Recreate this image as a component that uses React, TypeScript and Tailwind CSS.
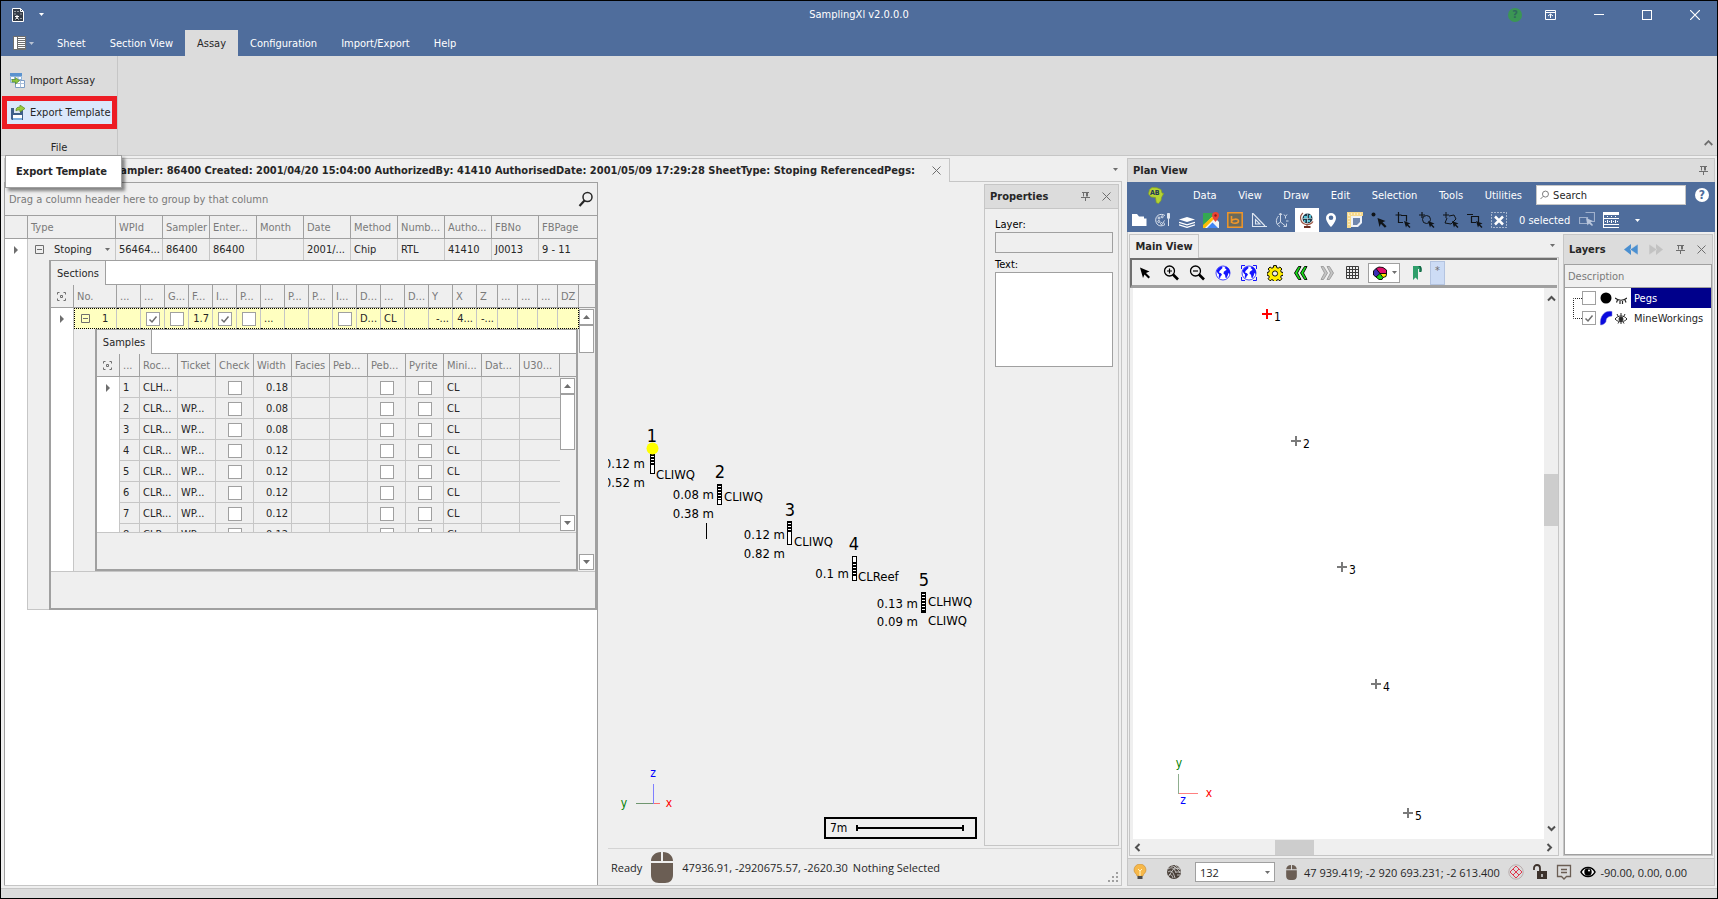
import React from "react";

type Kids = { children?: React.ReactNode };

/* ---------- small shared pieces ---------- */

function Svg({ size = 16, className = "", children }: Kids & { size?: number; className?: string }) {
  return (
    <svg width={size} height={size} viewBox="0 0 16 16" fill="none" aria-hidden="true" className={`shrink-0 ${className}`}>
      {children}
    </svg>
  );
}

function Tick({ checked = false, label }: { checked?: boolean; label: string }) {
  return (
    <span className="inline-grid size-[14px] shrink-0 align-middle">
      <input
        type="checkbox"
        defaultChecked={checked}
        aria-label={label}
        className="peer size-[14px] appearance-none border border-[#a0a0a0] bg-white [grid-area:1/1]"
      />
      <svg viewBox="0 0 14 14" className="pointer-events-none invisible size-[14px] peer-checked:visible [grid-area:1/1]" fill="none">
        <path d="M3.5 7.5 6 10l4.5-5.5" stroke="#6e6e6e" strokeWidth="1.5" />
      </svg>
    </span>
  );
}

function Caret({ className = "" }: { className?: string }) {
  return (
    <svg width="5" height="3" viewBox="0 0 5 3" aria-hidden="true" className={`shrink-0 ${className}`}>
      <path d="M0 0h5L2.5 3z" fill="currentColor" />
    </svg>
  );
}

function RowArrow() {
  return (
    <svg width="4" height="8" viewBox="0 0 4 8" className="mx-auto">
      <path d="M0 0l4 4-4 4z" fill="#6e6e6e" />
    </svg>
  );
}

function Minus() {
  return (
    <svg width="9" height="9" viewBox="0 0 9 9" className="inline-block shrink-0">
      <path d="M.5.5h8v8h-8zM2 4.5h5" fill="none" stroke="#6e6e6e" />
    </svg>
  );
}

function CornerBox() {
  return (
    <svg width="9" height="9" viewBox="0 0 9 9" className="ml-[3px]">
      <path d="M.5 2.500V.5h2M6.500.5h2v2M8.500 6.500v2h-2M2.500 8.500h-2v-2M3.500 3.500h2v2h-2z" fill="none" stroke="#6e6e6e" />
    </svg>
  );
}

function Pin() {
  return (
    <svg width="9" height="9" viewBox="0 0 9 9" fill="none" stroke="#6e6e6e">
      <path d="M1 .5h7M2.500.5v4M6.500.5v4M5.500.5v4M0 5.500h9M4.500 5v4" />
    </svg>
  );
}

function Cross() {
  return (
    <svg width="9" height="9" viewBox="0 0 9 9" fill="none" stroke="#6e6e6e">
      <path d="M.5.5l8 8M8.500.5l-8 8" />
    </svg>
  );
}

function ScrollButton({ down = false, label }: { down?: boolean; label: string }) {
  return (
    <button aria-label={label} className="flex h-4 w-[15px] shrink-0 items-center justify-center border border-[#a0a0a0] bg-white">
      <svg width="7" height="4" viewBox="0 0 7 4">
        <path d={down ? "M0 0h7L3.500 4z" : "M0 4h7L3.500 0z"} fill="#6e6e6e" />
      </svg>
    </button>
  );
}

/* ---------- title bar and ribbon ---------- */

const ribbonTabs = ["Sheet", "Section View", "Assay", "Configuration", "Import/Export", "Help"];

function TitleBar() {
  return (
    <header className="bg-[#4f6d9c] text-white">
      <div className="grid h-[29px] grid-cols-[1fr_auto_1fr] items-center pb-[2px]">
        <div className="flex items-center gap-[15px] pl-[11px]">
          <svg width="12" height="14" viewBox="0 0 12 14">
            <path d="M.5.5h8l3 3v10H.5z" fill="#333b47" stroke="#fff" />
            <path d="M8.500.5v3h3" fill="none" stroke="#fff" />
            <path d="M2.500 3.500h1M5.500 3.500h1M2.500 6h1M8.500 6h1M8.500 10.500h1M3 8.500h4M5 7v4M3.500 11.500l1.500-2 1.500 2" stroke="#fff" />
          </svg>
          <button aria-label="Customize quick access">
            <Caret />
          </button>
        </div>
        <h1>SamplingXl v2.0.0.0</h1>
        <div className="flex items-center justify-end pr-[17px]">
          <button aria-label="Help" className="mr-[23px] flex size-[14px] items-center justify-center rounded-full bg-[#3b9654] font-bold text-[#2f6a5c]">
            ?
          </button>
          <button aria-label="Ribbon display options" className="mr-[38px]">
            <svg width="11" height="10" viewBox="0 0 11 10" fill="none" stroke="#fff">
              <path d="M.5.5h10v9H.5zM.5 2.500h10M5.500 8V4M3 6l2.500-2L8 6" />
            </svg>
          </button>
          <button aria-label="Minimize" className="mr-[38px] h-px w-[10px] bg-white" />
          <button aria-label="Maximize" className="mr-[38px] size-[10px] border border-white" />
          <button aria-label="Close">
            <svg width="10" height="10" viewBox="0 0 10 10" stroke="#fff" strokeWidth="1.2">
              <path d="M0 0l10 10M10 0L0 10" />
            </svg>
          </button>
        </div>
      </div>
      <nav className="flex h-[26px] items-stretch">
        <button aria-label="Application menu" className="ml-3 mr-[11px] flex items-center gap-[3px] text-[#b9c3d3]">
          <svg width="13" height="14" viewBox="0 0 13 14" shapeRendering="crispEdges">
            <path d="M0 0h13v14H0z" fill="#6f6f6f" />
            <path d="M1 1h3v12H1z" fill="#fff" />
            <path d="M5 1.500h7M5 3.500h7M5 5.500h7M5 7.500h7M5 9.500h7M5 11.500h7" stroke="#fff" />
          </svg>
          <Caret />
        </button>
        {ribbonTabs.map((t) => (
          <button key={t} className={t === "Assay" ? "bg-[#dcdcdc] px-3 text-[#262626]" : "px-3"}>
            {t}
          </button>
        ))}
      </nav>
    </header>
  );
}

function Ribbon() {
  return (
    <div className="relative flex h-[100px] border-b border-[#c6c6c6] bg-[#dcdcdc]">
      <div className="flex w-[117px] flex-col border-r border-[#c6c6c6]">
        <button className="mt-2 flex h-8 items-center gap-1 pl-[9px]">
          <Svg>
            <path d="M0 1h12v3H0z" fill="#5b93cf" />
            <path d="M.5 4.500h11v6H.5zM4.500 4v7M8 4v7M.5 7.500h11" fill="#fff" stroke="#8fb4dc" />
            <path d="M5.500 8.500h9v7h-9z" fill="#fff" stroke="#7c9cc4" />
            <path d="M5.500 11.500h9M10.500 8.500v7" stroke="#a9bfdb" />
            <path d="M2 7.500h3.500v-2l4 3.200-4 3.300V10H2z" fill="#8cc63f" stroke="#55852a" strokeWidth=".7" />
          </Svg>
          Import Assay
        </button>
        <button className="ml-px flex h-[33px] items-center gap-1 border-[5px] border-[#ed1c24] bg-[#dbe8fb] pl-[3px]">
          <Svg>
            <path d="M1 3h3v5h6V5h3v10H2l-1-1z" fill="#3f5f8a" />
            <path d="M4 3h6v5H4z" fill="#dfe7f1" />
            <path d="M3 10h9v5H3z" fill="#fff" />
            <path d="M3 13h9v2H3z" fill="#7fb0e0" />
            <path d="M6 6c0-3 1-4 4-4V0l5 3.500L10 7V5C8 5 7 5 6 6z" fill="#9ccc3c" stroke="#5c8a22" strokeWidth=".7" />
          </Svg>
          <span className="whitespace-nowrap">Export Template</span>
        </button>
        <span className="mt-auto text-center leading-[15px]">File</span>
      </div>
      <button aria-label="Collapse ribbon" className="ml-auto mr-1 mt-[84px] self-start">
        <svg width="9" height="6" viewBox="0 0 9 6" fill="none" stroke="#6e6e6e" strokeWidth="1.800">
          <path d="M.7 5 4.500 1.200 8.300 5" />
        </svg>
      </button>
      <div role="tooltip" className="absolute left-1 top-full z-10 flex h-[33px] w-[117px] items-center border border-[#a0a0a0] bg-white pl-[10px] font-bold shadow-[3px_3px_3px_rgba(0,0,0,0.45)]">
        <span className="whitespace-nowrap">Export Template</span>
      </div>
    </div>
  );
}

/* ---------- grids ---------- */

const th = "overflow-hidden whitespace-nowrap border-b border-r border-[#a0a0a0] px-[3px] text-left font-normal text-[#7a7a7a]";
const td = "overflow-hidden whitespace-nowrap border-r border-[#c6c6c6] px-[3px]";

const sampleRows = [
  ["1", "CLH...", "", "0.18"],
  ["2", "CLR...", "WP...", "0.08"],
  ["3", "CLR...", "WP...", "0.08"],
  ["4", "CLR...", "WP...", "0.12"],
  ["5", "CLR...", "WP...", "0.12"],
  ["6", "CLR...", "WP...", "0.12"],
  ["7", "CLR...", "WP...", "0.12"],
  ["8", "CLR...", "WP...", "0.12"],
];

function DetailTab({ children }: Kids) {
  return (
    <div className="flex h-6">
      <button className="w-[55px] border-r border-[#a0a0a0]">{children}</button>
      <div className="flex-1 border-b border-[#a0a0a0] bg-white" />
    </div>
  );
}

function Samples() {
  const heads = ["...", "Roc...", "Ticket", "Check", "Width", "Facies", "Peb...", "Peb...", "Pyrite", "Mini...", "Dat...", "U30..."];
  return (
    <div className="flex h-[242px] flex-1 flex-col border-x-2 border-b-2 border-t border-[#a0a0a0] bg-[#efefef]">
      <DetailTab>Samples</DetailTab>
      <div className="h-[179px] overflow-hidden border-b border-[#c6c6c6]">
        <table className="w-full table-fixed border-separate border-spacing-0">
          <colgroup>
            <col className="w-[23px]" />
            <col className="w-[20px]" />
            {heads.slice(1, 11).map((_, i) => (
              <col key={i} className="w-[38px]" />
            ))}
            <col className="w-[40px]" />
            <col />
          </colgroup>
          <thead>
            <tr className="h-[23px]">
              <th className={th}>
                <CornerBox />
              </th>
              {heads.map((h, i) => (
                <th key={i} className={th}>
                  {h}
                </th>
              ))}
              <th className="border-b border-[#a0a0a0]" />
            </tr>
          </thead>
          <tbody>
            {sampleRows.map(([n, rock, ticket, width], i) => {
              const c = `${td} border-b`;
              return (
                <tr key={n} className="h-[21px]">
                  <td className="border-r border-[#c6c6c6] bg-white">{i === 0 && <RowArrow />}</td>
                  <td className={c}>{n}</td>
                  <td className={c}>{rock}</td>
                  <td className={c}>{ticket}</td>
                  <td className={`${c} text-center`}>
                    <Tick label={`Check ${n}`} />
                  </td>
                  <td className={`${c} text-right`}>{width}</td>
                  <td className={c} />
                  <td className={c} />
                  <td className={`${c} text-center`}>
                    <Tick label={`Pebble ${n}`} />
                  </td>
                  <td className={`${c} text-center`}>
                    <Tick label={`Pyrite ${n}`} />
                  </td>
                  <td className={c}>CL</td>
                  <td className={c} />
                  <td className="border-b border-[#c6c6c6]" />
                  {i === 0 && (
                    <td rowSpan={8} className="p-0 align-top">
                      <div className="flex h-[155px] flex-col pt-px">
                        <ScrollButton label="Scroll samples up" />
                        <div className="h-[56px] w-[15px] border border-[#a0a0a0] bg-white" />
                        <div className="flex-1" />
                        <ScrollButton down label="Scroll samples down" />
                        <div className="h-px" />
                      </div>
                    </td>
                  )}
                </tr>
              );
            })}
          </tbody>
        </table>
      </div>
    </div>
  );
}

const sectionHeads = ["...", "...", "G...", "F...", "I...", "P...", "...", "P...", "P...", "I...", "D...", "...", "D...", "Y", "X", "Z", "...", "...", "...", "DZ"];

function Sections() {
  const cells: React.ReactNode[] = [
    "",
    <Tick key="a" checked label="Flag" />,
    <Tick key="b" label="G" />,
    "1.7",
    <Tick key="c" checked label="I" />,
    <Tick key="d" label="P" />,
    "...",
    "",
    "",
    <Tick key="e" label="Inactive" />,
    "D...",
    "CL",
    "",
    "-...",
    "4...",
    "-...",
    "",
    "",
    "",
    "",
  ];
  return (
    <div className="flex h-[350px] flex-1 flex-col border-x-2 border-b-2 border-t border-[#a0a0a0] bg-[#efefef]">
      <DetailTab>Sections</DetailTab>
      <table className="w-full table-fixed border-separate border-spacing-0 border-b border-[#c6c6c6]">
        <colgroup>
          <col className="w-[23px]" />
          <col className="w-[43px]" />
          {sectionHeads.slice(0, 15).map((_, i) => (
            <col key={i} className="w-[24px]" />
          ))}
          <col className="w-[21px]" />
          <col className="w-[20px]" />
          <col className="w-[20px]" />
          <col className="w-[20px]" />
          <col className="w-[21px]" />
          <col />
        </colgroup>
        <thead>
          <tr className="h-[23px]">
            <th className={th}>
              <CornerBox />
            </th>
            <th className={th}>No.</th>
            {sectionHeads.map((h, i) => (
              <th key={i} className={th}>
                {h}
              </th>
            ))}
            <th className="border-b border-[#a0a0a0]" />
          </tr>
        </thead>
        <tbody>
          <tr className="h-[21px] bg-[#ffffc0]">
            <td className="border-r border-[#c6c6c6] bg-white">
              <RowArrow />
            </td>
            <td className="border-y border-l border-r border-dotted border-black border-r-[#c6c6c6] p-0 pl-[6px] [border-right-style:solid]">
              <span className="flex items-center gap-3">
                <Minus />1
              </span>
            </td>
            {cells.map((c, i) => (
              <td
                key={i}
                className={`overflow-hidden whitespace-nowrap border-y border-r border-dotted border-black p-0 ${i === 19 ? "" : "border-r-[#c6c6c6] [border-right-style:solid]"} ${i === 3 || (i > 12 && i < 16) ? "pr-[3px] text-right" : typeof c === "string" ? "pl-[3px]" : "text-center"}`}
              >
                {c}
              </td>
            ))}
            <td rowSpan={2} className="bg-[#efefef] p-0 align-top">
              <div className="flex h-[263px] flex-col pt-px">
                <ScrollButton label="Scroll sections up" />
                <div className="h-[28px] w-[15px] border border-[#a0a0a0] bg-white" />
                <div className="flex-1" />
                <ScrollButton down label="Scroll sections down" />
                <div className="h-px" />
              </div>
            </td>
          </tr>
          <tr>
            <td className="border-r border-[#c6c6c6] bg-white" />
            <td colSpan={21} className="p-0">
              <div className="flex pl-[21px] pr-px">
                <Samples />
              </div>
            </td>
          </tr>
        </tbody>
      </table>
    </div>
  );
}

function SheetGrid() {
  const heads = ["Type", "WPId", "Sampler", "Enter...", "Month", "Date", "Method", "Numb...", "Autho...", "FBNo", "FBPage"];
  const row = ["56464...", "86400", "86400", "", "2001/...", "Chip", "RTL", "41410", "J0013", "9 - 11"];
  return (
    <div className="flex w-[594px] shrink-0 flex-col border-x border-t border-[#a0a0a0] bg-white">
      <div className="flex h-8 shrink-0 items-center justify-between bg-[#efefef] pl-1 pr-[3px] text-[#7a7a7a]">
        <span>Drag a column header here to group by that column</span>
        <button aria-label="Search">
          <Svg>
            <circle cx="9.500" cy="6" r="4.500" stroke="#262626" strokeWidth="1.500" />
            <path d="M6.500 9.500 1.500 15" stroke="#262626" strokeWidth="2.200" />
          </Svg>
        </button>
      </div>
      <table className="w-full table-fixed border-separate border-spacing-0 border-t border-[#a0a0a0] bg-[#efefef]">
        <colgroup>
          <col className="w-[23px]" />
          <col className="w-[88px]" />
          {row.slice(1).map((_, i) => (
            <col key={i} className="w-[47px]" />
          ))}
          <col />
        </colgroup>
        <thead>
          <tr className="h-[23px]">
            <th className={th} />
            {heads.map((h) => (
              <th key={h} className={`${th} last:border-r-0`}>
                {h}
              </th>
            ))}
          </tr>
        </thead>
        <tbody>
          <tr className="h-[21px]">
            <td className="border-r border-[#c6c6c6] bg-white">
              <RowArrow />
            </td>
            <td className={td}>
              <span className="flex items-center pl-1 pr-[2px]">
                <Minus />
                <span className="pl-[10px]">Stoping</span>
                <Caret className="ml-auto text-[#6e6e6e]" />
              </span>
            </td>
            {row.map((c, i) => (
              <td key={i} className={`${td} last:border-r-0`}>
                {c}
              </td>
            ))}
          </tr>
        </tbody>
      </table>
      <div className="flex">
        <div className="w-[23px] shrink-0 border-r border-[#c6c6c6]" />
        <div className="w-[21px] shrink-0 border-b border-[#c6c6c6] bg-[#efefef]" />
        <Sections />
      </div>
    </div>
  );
}

/* ---------- section view ---------- */

function Stick({ x, y1, y2, s1, s2 }: { x: number; y1: number; y2: number; s1: number; s2: number }) {
  return (
    <g shapeRendering="crispEdges">
      <rect x={x + 0.5} y={y1 + 0.5} width="4" height={y2 - y1} fill="#fff" stroke="#000" />
      <path d={`M${x + 2.5} ${s1}V${s2}`} stroke="#000" strokeWidth="5" strokeDasharray="2 1" />
    </g>
  );
}

function SectionCanvas() {
  const labels: [number, number, string, "start" | "end"][] = [
    [645, 468, "0.12 m", "end"],
    [645, 487, "0.52 m", "end"],
    [656, 479, "CLIWQ", "start"],
    [714, 499, "0.08 m", "end"],
    [714, 518, "0.38 m", "end"],
    [724, 501, "CLIWQ", "start"],
    [785, 539, "0.12 m", "end"],
    [785, 558, "0.82 m", "end"],
    [794, 546, "CLIWQ", "start"],
    [849, 578, "0.1 m", "end"],
    [858, 581, "CLReef", "start"],
    [918, 608, "0.13 m", "end"],
    [918, 626, "0.09 m", "end"],
    [928, 606, "CLHWQ", "start"],
    [928, 625, "CLIWQ", "start"],
  ];
  const numbers: [number, number, string][] = [
    [652, 442, "1"],
    [720, 478, "2"],
    [790, 516, "3"],
    [854, 550, "4"],
    [924, 586, "5"],
  ];
  return (
    <div className="flex min-w-0 flex-1 overflow-hidden">
      <svg width="376" height="665" viewBox="608 182 376 665" className="shrink-0" role="img" aria-label="Section view">
        {labels.map(([x, y, t, a], i) => (
          <text key={i} x={x} y={y} textAnchor={a} fontSize="13">
            {t}
          </text>
        ))}
        {numbers.map(([x, y, t]) => (
          <text key={t} x={x} y={y} textAnchor="middle" fontSize="18">
            {t}
          </text>
        ))}
        <Stick x={650} y1={454} y2={473} s1={454} s2={466} />
        <Stick x={717} y1={484} y2={504} s1={484} s2={500} />
        <Stick x={787} y1={521} y2={544} s1={521} s2={533} />
        <Stick x={852} y1={556} y2={580} s1={562} s2={576} />
        <Stick x={921} y1={592} y2={612} s1={592} s2={612} />
        <circle cx="652.5" cy="448.5" r="6" fill="#ff0" />
        <path d="M706.5 523v16" stroke="#000" />
        <path d="M636 803.500h18" stroke="#6f966f" />
        <path d="M654 803.500h6" stroke="#ff6b6b" />
        <path d="M653.500 784v20" stroke="#7f7fff" />
        <g fontSize="12" textAnchor="middle">
          <text x="653" y="777" fill="#00f">z</text>
          <text x="624" y="807" fill="#008000">y</text>
          <text x="669" y="807" fill="#f00">x</text>
        </g>
        <rect x="825" y="818" width="151" height="20" fill="#efefef" stroke="#000" strokeWidth="2" />
        <text x="830" y="832" fontSize="12">7m</text>
        <path d="M857 828h106" stroke="#000" strokeWidth="2" />
        <path d="M857 825v6M963 825v6" stroke="#000" strokeWidth="2" />
      </svg>
    </div>
  );
}

function Mouse({ className }: { className: string }) {
  return (
    <svg viewBox="0 0 22 31" className={className} fill="#6b5e54">
      <path d="M10 0v9H0C0 4 4 0 10 0zM12 0v9h10c0-5-4-9-10-9zM0 11h22v12c0 5-3 8-8 8H8c-5 0-8-3-8-8z" />
    </svg>
  );
}

function Properties() {
  return (
    <aside className="mb-[2px] mr-[2px] mt-[2px] flex w-[135px] shrink-0 flex-col border border-[#c6c6c6]">
      <div className="flex h-6 items-center border-b border-[#c6c6c6] bg-[#dcdcdc] pl-[5px] pr-[7px]">
        <h2 className="flex-1 font-bold">Properties</h2>
        <button aria-label="Pin properties" className="mr-3">
          <Pin />
        </button>
        <button aria-label="Close properties">
          <Cross />
        </button>
      </div>
      <div className="flex flex-col px-[10px] pr-[5px] pt-2 text-black">
        <label htmlFor="layer" className="leading-[15px]">Layer:</label>
        <input id="layer" className="h-[21px] border border-[#a0a0a0] bg-[#efefef]" />
        <label htmlFor="text" className="mt-1 leading-[15px]">Text:</label>
        <textarea id="text" className="h-[95px] resize-none border border-[#a0a0a0] bg-white" />
      </div>
    </aside>
  );
}

function DocumentPane() {
  return (
    <section className="flex min-w-0 flex-1 flex-col">
      <div className="flex h-6 shrink-0">
        <div className="flex w-[946px] items-center justify-end overflow-hidden border-x border-t border-[#c6c6c6]">
          <span className="whitespace-nowrap font-bold">
            Sampler: 86400 Created: 2001/04/20 15:04:00 AuthorizedBy: 41410 AuthorisedDate: 2001/05/09 17:29:28 SheetType: Stoping ReferencedPegs:
          </span>
          <button aria-label="Close tab" className="ml-[17px] mr-2">
            <Cross />
          </button>
        </div>
        <div className="flex flex-1 items-center justify-end border-b border-[#c6c6c6] pr-1 text-[#6e6e6e]">
          <Caret />
        </div>
      </div>
      <div className="flex min-h-0 flex-1 border-b border-r border-[#c6c6c6]">
        <SheetGrid />
        <div className="ml-[10px] flex min-w-0 flex-1 flex-col">
          <div className="flex min-h-0 flex-1">
            <SectionCanvas />
            <Properties />
          </div>
          <div className="flex h-[37px] shrink-0 items-center border-t border-[#d4d4d4] pl-[3px] font-['Open_Sans','Noto_Sans',sans-serif] text-[11px]">
            <span>Ready</span>
            <Mouse className="mx-[9px] h-[31px] w-[22px]" />
            <span>47936.91, -2920675.57, -2620.30</span>
            <span className="ml-[5px]">Nothing Selected</span>
            <svg width="11" height="11" viewBox="0 0 11 11" className="mb-[2px] ml-auto mr-[2px] self-end" fill="#a0a0a0">
              <path d="M8 0h2v2H8zM8 4h2v2H8zM4 4h2v2H4zM8 8h2v2H8zM4 8h2v2H4zM0 8h2v2H0z" />
            </svg>
          </div>
        </div>
      </div>
    </section>
  );
}

/* ---------- plan view ---------- */

const arrowCursor = "M9 9l6.500 2.500-2.500 1 2.500 2.500-1 1-2.500-2.500-1 2z";

const mapTools: [string, React.ReactNode][] = [
  ["Open", <path key="i" d="M1 2h5l2 2.500h5v2h2.500V14H1z" fill="#fff" />],
  [
    "Palette",
    <g key="i" stroke="#dfe6f0" strokeWidth="1">
      <path d="M10 3.500C5 .5 0 4 .8 9s5.700 6 9.200 3.500c-1.500-1-2-2.500-.5-4" />
      <circle cx="4" cy="6" r="1" />
      <circle cx="7.200" cy="4.800" r="1" />
      <circle cx="3.800" cy="9.500" r="1" />
      <circle cx="6.500" cy="11.500" r="1" />
      <path d="M13.500 7v7M12.500 1.500h2V6l-1 1-1-1z" fill="#dfe6f0" />
    </g>,
  ],
  [
    "Layers",
    <g key="i" fill="#fff">
      <path d="M0 7.500 8 5l8 2.500L8 10z" />
      <path d="M0 10.300 8 12.800l8-2.500M0 12.800l8 2.500 8-2.500" fill="none" stroke="#fff" strokeWidth="1.400" />
    </g>,
  ],
  [
    "Google map",
    <g key="i">
      <path d="M0 1h9l4 5v10H0z" fill="#34a853" />
      <path d="M0 16V14L10 4l6 6v6z" fill="#f4f4f4" />
      <path d="M4 16l5.500-5.500L15 16z" fill="#4285f4" />
      <path d="M11 7 2 16H0v-3l9-8z" fill="#fbbc05" />
      <path d="M12.500 0A3.500 3.500 0 0 1 16 3.500C16 6 12.500 10 12.500 10S9 6 9 3.500A3.500 3.500 0 0 1 12.500 0z" fill="#ea4335" />
      <circle cx="12.500" cy="3.500" r="1.200" fill="#8c1d16" />
    </g>,
  ],
  [
    "Bing map",
    <g key="i">
      <path d="M.8.800h14.400v14.400H.8z" fill="#6a6a5c" stroke="#f0962a" strokeWidth="1.500" />
      <path d="M4.500 4v7M4.500 9.500C4.500 7 11.500 6 11.500 9s-7 3-7 .5z" stroke="#f0962a" strokeWidth="1.600" />
    </g>,
  ],
  ["Set square", <path key="i" d="M1.500 1v13.500H16M2 1.500 14 14M4.500 7.500v4.500h4.500z" stroke="#dfe6f0" strokeWidth="1.100" />],
  [
    "Axes",
    <path key="i" d="M5.500 1.500V10l5 4M5.500 10 2 12.500M3.500 4C0 8 1 13 5 14.500M4 3l1.500-2L7 3M9 2.500l1.500 2 1.500-2M10.500 4.500v2M8.500 14.500h3v-3M11 9h2.500" stroke="#cfd9e8" strokeWidth="1" />,
  ],
  [
    "Globe",
    <g key="i">
      <circle cx="8.500" cy="6.500" r="5" fill="#1f3b4c" />
      <path d="M5 4h3v2.500H5zM10 3h2v3h-2zM8 8h3v2H8zM5 8h1.500v2H5z" fill="#54c3d6" />
      <path d="M3.500 6.500h10M8.500 1.500v10" stroke="#cfe3e8" strokeWidth=".6" />
      <path d="M4 1C0 4 1 11 7 12.500c3 .5 5.500-.5 7-3M8 12v3" stroke="#9a5544" strokeWidth="1.200" />
      <path d="M5 14h6.500v2H5z" fill="#6d2f22" />
    </g>,
  ],
  ["Place", <path key="i" fillRule="evenodd" d="M8 1a5 5 0 0 1 5 5c0 4-5 9-5 9S3 10 3 6a5 5 0 0 1 5-5zm0 2.500a2.300 2.300 0 1 0 0 4.600 2.300 2.300 0 0 0 0-4.600z" fill="#fff" />],
  [
    "Layout",
    <g key="i">
      <path d="M0 0h16v4H4v12H0z" fill="#f6d98c" />
      <path d="M4 4h11v7l-4 4H4z" fill="#eef2f8" />
      <path d="M6 6h7v4l-3 3H6z" fill="#6f86ad" />
      <path d="M1 2h14M2 3v12" stroke="#fff" strokeDasharray="1 2" />
    </g>,
  ],
  [
    "Select point",
    <g key="i" fill="#101418">
      <circle cx="2.500" cy="2.500" r="2" />
      <path d="M6.500 6l8 3-3 1.200 4 4-1.600 1.600-4-4L8.500 15z" />
    </g>,
  ],
  [
    "Select box",
    <g key="i">
      <path d="M3.500 0v6M.5 3h6M6 3.500h5.500v6M3.500 5.500v5H8" stroke="#101418" strokeWidth="1.200" />
      <path d={arrowCursor} fill="#101418" />
    </g>,
  ],
  [
    "Select circle",
    <g key="i">
      <path d="M3 0v6M0 3h6" stroke="#101418" strokeWidth="1.200" />
      <circle cx="7.500" cy="7.500" r="4" stroke="#101418" />
      <path d={arrowCursor} fill="#101418" />
    </g>,
  ],
  [
    "Select polygon",
    <g key="i">
      <path d="M3 0v6M0 3h6M6 4l5-1 2 4-5 5-6-1 2-5" stroke="#101418" />
      <path d={arrowCursor} fill="#101418" />
    </g>,
  ],
  [
    "Deselect box",
    <g key="i">
      <path d="M0 2.500h6M4 4.500h7.500V10M4.500 4.500v6H9" stroke="#101418" strokeWidth="1.200" />
      <path d={arrowCursor} fill="#101418" />
    </g>,
  ],
  [
    "Clear selection",
    <g key="i">
      <path d="M.5.5h15v15H.5z" stroke="#fff" strokeDasharray="1 2" />
      <path d="M4 4.500l8 8M12 4.500l-8 8" stroke="#fff" strokeWidth="2.500" />
    </g>,
  ],
];

const earth = (
  <g>
    <circle cx="8" cy="8" r="7" fill="#fff" stroke="#1414ff" strokeWidth=".8" />
    <path d="M1.500 5.500 4 2.500l3-1 .5 1.500L6 4.500 4.500 6l-.5 1.500 2 .8 1 1.500-1.500 1.800-.5 2L3.800 12 4 9.500 2.500 8zM9.500 3l1.500-1.500 2.500 1.800L15 6v3l-1.500-1-.8 2.500-1.200 2.500-1-.3-.5-3-1.500-1 .3-2 1.700-1.200 1-.5-.5-1z" fill="#1414ff" />
  </g>
);

const viewTools: [string, React.ReactNode][] = [
  ["Pointer", <path key="i" d="M3 2.500l9.500 4-3.500 1.500 4 4-1.500 1.500-4-4L6 13z" fill="#000" />],
  [
    "Zoom in",
    <g key="i">
      <circle cx="6.500" cy="6" r="5" stroke="#000" strokeWidth="1.300" />
      <path d="M4 6h5M6.500 3.500v5" stroke="#000" strokeWidth="1.200" />
      <path d="M10 9.500l5 5" stroke="#000" strokeWidth="2.600" />
    </g>,
  ],
  [
    "Zoom out",
    <g key="i">
      <circle cx="6.500" cy="6" r="5" stroke="#000" strokeWidth="1.300" />
      <path d="M4 6h5" stroke="#000" strokeWidth="1.200" />
      <path d="M10 9.500l5 5" stroke="#000" strokeWidth="2.600" />
    </g>,
  ],
  ["Zoom world", <g key="i">{earth}</g>],
  [
    "Zoom extents",
    <g key="i">
      {earth}
      <path d="M.5 4V.5H4M12 .5h3.500V4M15.500 12v3.500H12M4 15.500H.5V12" stroke="#1414ff" />
    </g>,
  ],
  [
    "Settings",
    <g key="i">
      <path
        d="M6.600.6h2.800l.3 2 1.500.6 1.700-1.200 2 2-1.200 1.700.6 1.500 2 .3v2.800l-2 .3-.6 1.500 1.200 1.700-2 2-1.700-1.200-1.500.6-.3 1.600H6.600l-.3-1.600-1.500-.6-1.700 1.200-2-2 1.200-1.700-.6-1.500-1.600-.3V7.500l1.600-.3.6-1.500L1.100 4l2-2 1.700 1.200 1.500-.6z"
        fill="#ffee00"
        stroke="#000"
        strokeLinejoin="round"
      />
      <circle cx="8" cy="8.500" r="2.600" fill="#efefef" stroke="#000" strokeWidth=".9" />
    </g>,
  ],
  ["Previous view", <path key="i" d="M8 1.500H5.500L1.500 8l4 6.500H8L4.500 8zM14 1.500h-2.500L7.500 8l4 6.500H14L10.500 8z" fill="#18e018" stroke="#000" strokeWidth=".9" />],
  ["Next view", <path key="i" d="M2 1.500h2.500L8.500 8l-4 6.500H2L5.500 8zM8 1.500h2.500l4 6.500-4 6.500H8L11.500 8z" fill="#c4c4c4" stroke="#9a9a9a" strokeWidth=".9" />],
  ["Grid", <path key="i" d="M1.500 1.500h12v12h-12zM1.500 4.500h12M1.500 7.500h12M1.500 10.500h12M4.500 1.500v12M7.500 1.500v12M10.500 1.500v12" stroke="#3c3c3c" strokeWidth="1" />],
];

function PlanMenu() {
  return (
    <div className="shrink-0 bg-[#4f6d9c] text-white">
      <div className="flex h-[26px] items-center pr-[6px]">
        <svg width="16" height="17" viewBox="0 0 16 17" className="ml-[21px] mr-[29px]">
          <path d="M1.500 2.500 4 .6 9 .8l4 1.700 1 3.500 1.700.5-2.200 4-.5 3-2.500 3-2.200-.8-.8-5.200L3 10 .5 7z" fill="#b5d334" stroke="#85a31c" strokeWidth=".7" />
          <text x="2" y="7.500" fontSize="7" fontWeight="bold" fill="#1d3557">
            AB
          </text>
        </svg>
        <nav className="flex flex-1 justify-between pr-[14px]">
          {["Data", "View", "Draw", "Edit", "Selection", "Tools", "Utilities"].map((m) => (
            <button key={m}>{m}</button>
          ))}
        </nav>
        <label className="flex h-5 w-[150px] items-center gap-1 border border-[#c6c6c6] bg-white pl-[3px] text-[#262626]">
          <svg width="10" height="10" viewBox="0 0 10 10" fill="none" stroke="#6e6e6e">
            <circle cx="6" cy="4" r="3.300" />
            <path d="M3.500 6.500.5 9.500" />
          </svg>
          <input aria-label="Search" defaultValue="Search" className="w-full min-w-0 bg-transparent outline-none" />
        </label>
        <button aria-label="Plan help" className="ml-[9px] flex size-[14px] items-center justify-center rounded-full bg-white text-[12px] font-bold text-[#4f6d9c]">
          ?
        </button>
      </div>
      <div className="flex h-6 items-stretch">
        {mapTools.map(([name, art]) => (
          <button key={name} aria-label={name} className={`flex w-6 items-center justify-center ${name === "Globe" ? "bg-white" : ""}`}>
            <Svg>{art}</Svg>
          </button>
        ))}
        <span className="flex items-center pl-2 pr-[9px]">0 selected</span>
        <button aria-label="Selection set" className="mr-2">
          <Svg>
            <path d="M.5 5.500h8v6h-8zM6.500.5h9v9h-4" stroke="#9fb0cc" strokeWidth="1.200" />
            <path d="M7 6l7 3-2.500 1L14 13l-1 1-3-2.500-1.500 2z" fill="#b9c6dc" />
          </Svg>
        </button>
        <button aria-label="Table">
          <svg width="16" height="16" viewBox="0 0 16 16" shapeRendering="crispEdges" fill="none" stroke="#fff">
            <path d="M0 0h16v3H0z" fill="#fff" stroke="none" />
            <path d="M0 6.500h16M0 12.500h16M0 15.500h16" />
            <path d="M4.500 4v9M8.500 4v9M12.500 4v9M0 9.500h16" strokeDasharray="1 1" />
            <path d="M.5 0v16" />
          </svg>
        </button>
        <button aria-label="More tools" className="ml-4">
          <Caret />
        </button>
      </div>
    </div>
  );
}

function PlanCanvas() {
  const pegs: [number, number][] = [
    [1267, 314],
    [1296, 441],
    [1342, 567],
    [1376, 684],
    [1408, 813],
  ];
  return (
    <svg width="410" height="551" viewBox="1133 288 410 551" className="shrink-0" role="img" aria-label="Plan view of pegs">
      {pegs.map(([x, y], i) => (
        <g key={i}>
          <path d={`M${x - 5} ${y}h10M${x} ${y - 5}v10`} stroke={i === 0 ? "#f00" : "#7a7a7a"} strokeWidth="2" />
          <text x={x + 7} y={y + 7} fontSize="12">
            {i + 1}
          </text>
        </g>
      ))}
      <path d="M1178.500 774v20" stroke="#8fae8f" />
      <path d="M1179 793.500h19" stroke="#ff8080" />
      <g fontSize="12" textAnchor="middle">
        <text x="1179" y="767" fill="#008000">y</text>
        <text x="1209" y="797" fill="#f00">x</text>
        <text x="1183" y="804" fill="#00f">z</text>
      </g>
    </svg>
  );
}

function Chevron({ d }: { d: string }) {
  return (
    <svg width="9" height="9" viewBox="0 0 9 9" fill="none" stroke="#505050" strokeWidth="2" className="shrink-0">
      <path d={d} />
    </svg>
  );
}

function MainView() {
  return (
    <div className="flex min-w-0 flex-1 flex-col">
      <div className="flex h-6 shrink-0">
        <button className="w-[70px] border-x border-t border-[#c6c6c6] font-bold">Main View</button>
        <div className="flex flex-1 items-center justify-end border-b border-[#c6c6c6] pr-1 text-[#6e6e6e]">
          <Caret />
        </div>
      </div>
      <div className="flex min-h-0 flex-1 flex-col border-x border-b border-[#c6c6c6]">
        <div className="mr-px flex h-[30px] shrink-0 items-center border-b-[3px] border-l-2 border-t-2 border-b-[#a0a0a0] border-l-[#707070] border-t-[#707070]">
          {viewTools.map(([name, art]) => (
            <button key={name} aria-label={name} className="flex w-[26px] justify-center">
              <Svg>{art}</Svg>
            </button>
          ))}
          <button aria-label="Colour scheme" className="ml-[2px] flex h-5 w-8 items-center justify-center gap-1 border border-[#a0a0a0] bg-white text-[#6e6e6e]">
            <Svg>
              <path d="M4 3.500 7 2l4 .5 3.500 2.500v4H8z" fill="#e0106c" />
              <path d="M8 8.500 4 3.500 1.500 6v4l2.500 2z" fill="#3a2fb5" />
              <path d="M8 8.500l-4 3.500 3 2.500h3l1-2z" fill="#16d016" />
              <path d="M8 8.500l3 4 3-1 .5-3z" fill="#ffe600" />
              <path d="M4 3.500 7 2l4 .5 3.500 2.500v4L14 11.500l-3 1-1 2H7L4 12l-2.500-2V6zM8 8.500l-4-5M8 8.500h6M8 8.500l3 4M8 8.500 4 12" stroke="#000" strokeWidth=".9" />
            </Svg>
            <Caret />
          </button>
          <button aria-label="Bookmark" className="ml-[9px]">
            <Svg>
              <path d="M4 1h7c2 0 2 6 1 6h-2v-3H9v11l-2.500-2.500L4 15z" fill="#2f9e6b" />
              <path d="M9 1h2c2 0 2 6 1 6h-1c1-2 0-5-2-6z" fill="#116443" />
            </Svg>
          </button>
          <button aria-label="Custom" className="ml-[5px] h-6 w-[15px] border border-[#b4c4e0] bg-[#cddcf5] pb-1 text-[#6e6e6e]">*</button>
        </div>
        <div className="flex min-h-0 flex-1 pl-[3px]">
          <div className="flex min-w-0 flex-1 overflow-hidden bg-white">
            <PlanCanvas />
          </div>
          <div className="flex w-[14px] shrink-0 flex-col items-center py-[6px]">
            <Chevron d="M1 6.500 4.500 3 8 6.500" />
            <div className="mt-[171px] h-[52px] w-full shrink-0 bg-[#cdcdcd]" />
            <span className="mt-auto">
              <Chevron d="M1 2.500 4.500 6 8 2.500" />
            </span>
          </div>
        </div>
        <div className="flex h-4 shrink-0 items-center pl-[3px] pr-1">
          <Chevron d="M6.500 1 3 4.500 6.500 8" />
          <div className="ml-[133px] h-[15px] w-[39px] bg-[#cdcdcd]" />
          <span className="ml-auto">
            <Chevron d="M2.500 1 6 4.500 2.500 8" />
          </span>
        </div>
      </div>
    </div>
  );
}

function LayersPanel() {
  return (
    <aside className="flex w-[150px] shrink-0 flex-col border border-[#c6c6c6]">
      <div className="flex h-[29px] shrink-0 items-center bg-[#dcdcdc] pl-[5px] pr-[6px]">
        <h2 className="flex-1 font-bold">Layers</h2>
        <button aria-label="Previous layer" className="mr-[11px]">
          <svg width="14" height="11" viewBox="0 0 14 11">
            <path d="M7 0v11L0 5.500z" fill="#4a8fd0" />
            <path d="M14 0v11L6 5.500z" fill="#4a8fd0" stroke="#dcdcdc" strokeWidth=".6" />
          </svg>
        </button>
        <button aria-label="Next layer" className="mr-[13px]">
          <svg width="14" height="11" viewBox="0 0 14 11">
            <path d="M7 0v11l7-5.500z" fill="#c2c2c2" />
            <path d="M0 0v11l8-5.500z" fill="#c2c2c2" stroke="#dcdcdc" strokeWidth=".6" />
          </svg>
        </button>
        <button aria-label="Pin layers" className="mr-3">
          <Pin />
        </button>
        <button aria-label="Close layers">
          <Cross />
        </button>
      </div>
      <div className="flex min-h-0 flex-1 flex-col border border-[#a0a0a0] bg-white">
        <div className="flex h-[23px] shrink-0 items-center border-b border-[#a0a0a0] bg-[#efefef] pl-[3px] text-[#7a7a7a]">Description</div>
        {["Pegs", "MineWorkings"].map((name, i) => (
          <div key={name} className="flex h-5 shrink-0 items-center">
            <svg width="9" height="20" viewBox="0 0 9 20" className="ml-2 shrink-0" fill="none" stroke="#262626" strokeDasharray="1 1">
              <path d={i === 0 ? "M9 10.500H.5V20" : "M.5 0v10.500H9"} />
            </svg>
            <Tick checked={i === 1} label={`Show ${name}`} />
            {i === 0 ? (
              <Svg className="ml-[2px]">
                <circle cx="8" cy="8" r="5.500" fill="#000" />
              </Svg>
            ) : (
              <Svg className="ml-[2px]">
                <path d="M2.500 15C2 11 2.500 7.500 5 4.500S10 1 14 1.500V6c-4 .5-6 2-6 5.500-1 2-3 3.500-5.500 3.500z" fill="#0a0adf" stroke="#7b7bd0" strokeWidth=".5" />
              </Svg>
            )}
            {i === 0 ? (
              <svg width="12" height="14" viewBox="0 0 12 14" fill="none" stroke="#262626" strokeWidth="1.200" className="ml-px shrink-0">
                <path d="M0 7c3 3 9 3 12 0M2.500 9l-1 2.500M5 10v3M7.500 10v3M10 9l1 2.500" />
              </svg>
            ) : (
              <svg width="12" height="14" viewBox="0 0 12 14" fill="none" stroke="#262626" className="ml-px shrink-0">
                <path d="M0 8c3-4 9-4 12 0-3 3.500-9 3.500-12 0zM2 3l1 2M6 2v3M10 3 9 5M3 12.500l1-1.500M6 13v-2M9 12.500 8 11" />
                <circle cx="6" cy="8" r="2" fill="#262626" />
              </svg>
            )}
            <span className={`ml-1 flex h-full flex-1 items-center pl-[3px] ${i === 0 ? "bg-[#00008b] text-white" : ""}`}>{name}</span>
          </div>
        ))}
      </div>
    </aside>
  );
}

function PlanStatus() {
  return (
    <footer className="flex h-7 shrink-0 items-center border border-[#c6c6c6] bg-[#dcdcdc] pl-1 font-['Open_Sans','Noto_Sans',sans-serif]">
      <Svg>
        <path d="M8 0a6 6 0 0 1 6 6c0 3-3 4-3 6H5c0-2-3-3-3-6a6 6 0 0 1 6-6z" fill="#f6b84a" stroke="#c98b2e" strokeWidth=".6" />
        <path d="M6 5l2 2 2-2M8 7v5" stroke="#fff3c4" />
        <path d="M5.500 12h5v3h-5z" fill="#4b4b4b" />
      </Svg>
      <Svg className="ml-[18px]">
        <circle cx="8" cy="8" r="7" fill="#4a4039" />
        <path d="M2 5c3-2 6-2 8 4M2 8c3-2 5-1 7 6M3 11c2-1 3 0 4 3M5 2c4 0 7 3 9 7M9 1c3 2 4 4 5 5M8 5l6-1M10 8l5 0M11 11l3 0M2 13 9 3" stroke="#dcdcdc" strokeWidth=".8" />
      </Svg>
      <label className="ml-[13px] flex">
        <select aria-label="Scale" defaultValue="132" className="h-5 w-20 appearance-none border border-[#a0a0a0] bg-white pl-1 text-[11px]">
          <option>132</option>
        </select>
        <Caret className="pointer-events-none -ml-[10px] mr-[5px] self-center text-[#6e6e6e]" />
      </label>
      <Mouse className="ml-[11px] mr-[7px] h-[15px] w-[11px]" />
      <span className="whitespace-nowrap">47 939.419; -2 920 693.231; -2 613.400</span>
      <div className="ml-auto flex items-center gap-2 pr-2">
        <Svg>
          <circle cx="8" cy="8" r="7.200" stroke="#b9adad" />
          <path d="M8 2l6 6-6 6-6-6zM5 5l6 6M11 5l-6 6" stroke="#e0364c" />
        </Svg>
        <Svg>
          <path d="M2 6V4a3 3 0 0 1 6 0v4" stroke="#3d322c" strokeWidth="1.800" />
          <path d="M5 7h10v8H5z" fill="#3d322c" />
          <path d="M10 10v3" stroke="#dcdcdc" strokeWidth="1.500" />
        </Svg>
        <Svg>
          <path d="M1.500 1.500h13v11h-4L8 15l-2.500-2.500h-4zM5 5.500h6M5 8.500h6" stroke="#6b5e54" strokeWidth="1.300" />
        </Svg>
        <Svg>
          <path d="M1 8c3-6 11-6 14 0-3 6-11 6-14 0z" fill="#fff" stroke="#000" strokeWidth="1.600" />
          <circle cx="8" cy="8" r="3.700" fill="#000" />
          <circle cx="9" cy="6.500" r="1" fill="#fff" />
        </Svg>
        <span className="-ml-1 whitespace-nowrap pr-[19px]">-90.00, 0.00, 0.00</span>
      </div>
    </footer>
  );
}

function PlanPane() {
  return (
    <section className="flex w-[588px] shrink-0 flex-col">
      <div className="flex h-6 shrink-0 items-center justify-between border-x border-t border-[#c6c6c6] bg-[#dcdcdc] pl-[5px] pr-[6px]">
        <h2 className="font-bold">Plan View</h2>
        <button aria-label="Pin plan view">
          <Pin />
        </button>
      </div>
      <PlanMenu />
      <div className="flex min-h-0 flex-1 gap-1 border-x border-[#c6c6c6] px-px py-[2px]">
        <MainView />
        <LayersPanel />
      </div>
      <PlanStatus />
    </section>
  );
}

export default function App() {
  return (
    <div className="flex h-screen flex-col border border-black bg-[#efefef] font-['DejaVu_Sans_Condensed','DejaVu_Sans',sans-serif] text-[11px] leading-[15px] text-[#262626]">
      <TitleBar />
      <Ribbon />
      <main className="flex min-h-0 flex-1 gap-[5px] pb-[2px] pl-[3px] pr-[2px] pt-[2px]">
        <DocumentPane />
        <PlanPane />
      </main>
      <div className="h-[10px] shrink-0 border-t border-[#c6c6c6] bg-[#dcdcdc]" />
    </div>
  );
}
